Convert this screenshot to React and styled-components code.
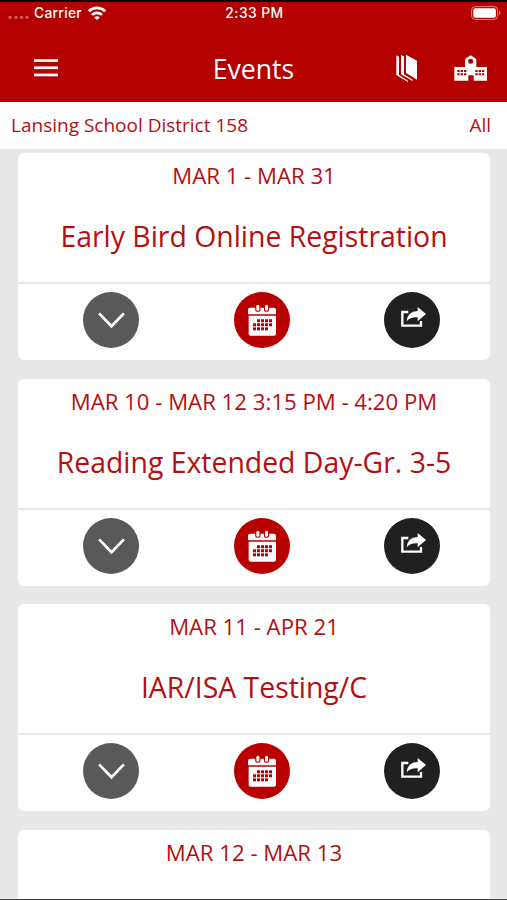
import React from "react";
import styled, { createGlobalStyle } from "styled-components";

const GlobalStyle = createGlobalStyle`
  * {
    box-sizing: border-box;
  }
  body {
    margin: 0;
    background: #e8e8e8;
    font-family: "Open Sans", "Noto Sans", sans-serif;
  }
  svg {
    display: block;
  }
`;

const Screen = styled.div`
  width: 507px;
  height: 900px;
  display: flex;
  flex-direction: column;
  overflow: hidden;
  background: #e8e8e8;
  border-top: 2px solid #0c0000;
  border-bottom: 1px solid #444;
`;

const Header = styled.header`
  flex: none;
  height: 100px;
  background: #b50000;
  color: #fff;
`;

const StatusBar = styled.div`
  display: grid;
  grid-template-columns: 1fr auto 1fr;
  align-items: center;
  height: 22px;
  padding: 0 6px 0 8px;
  font-family: Inter, "Liberation Sans", sans-serif;
  font-size: 13.8px;
  font-weight: 500;
  line-height: 22px;
`;

const Carrier = styled.div`
  display: flex;
  align-items: center;
`;

const CarrierName = styled.span`
  margin: 0 6px 0 5px;
  letter-spacing: 0.3px;
`;

const Clock = styled.span`
  letter-spacing: 0.45px;
`;

const Battery = styled.div`
  justify-self: end;
`;

const NavBar = styled.div`
  display: grid;
  grid-template-columns: minmax(0, 1fr) auto minmax(0, 1fr);
  align-items: center;
  height: 78px;
  padding: 10px 19px 0 19px;
`;

const MenuButton = styled.div`
  padding-left: 15px;
`;

const NavTitle = styled.h1`
  margin: 0;
  padding-top: 2px;
  font-size: 26.6px;
  font-weight: 400;
  line-height: 36px;
`;

const NavActions = styled.div`
  display: flex;
  align-items: center;
  justify-content: flex-end;
  gap: 36px;
`;

const FilterBar = styled.div`
  flex: none;
  display: flex;
  align-items: center;
  justify-content: space-between;
  height: 47px;
  padding: 0 16px 2px 11px;
  background: #fff;
  color: #b50f0f;
  font-size: 19px;
`;

const EventList = styled.main`
  display: flex;
  flex-direction: column;
  gap: 18.5px;
  padding: 4px 17px 0 18px;
`;

const Card = styled.article`
  flex: none;
  height: 207px;
  border-radius: 6px;
  background: #fff;
  color: #b50f0f;
  text-align: center;
`;

const CardBody = styled.div`
  height: 131px;
  padding-top: 8px;
  border-bottom: 2px solid #e8e8e8;
`;

const EventDate = styled.div`
  font-size: 22.2px;
  line-height: 30px;
`;

const EventTitle = styled.h2`
  margin: 25px 0 0;
  font-size: 28.4px;
  font-weight: 400;
  line-height: 40px;
`;

const CardActions = styled.div`
  display: flex;
  justify-content: space-between;
  padding: 8px 50px 0 65px;
`;

const RoundButton = styled.button`
  display: flex;
  width: 56px;
  height: 56px;
  padding: 0;
  border: none;
  border-radius: 50%;
  background: ${(props) => props.$color};
`;

const events = [
  { date: "MAR 1 - MAR 31", title: "Early Bird Online Registration" },
  { date: "MAR 10 - MAR 12 3:15 PM - 4:20 PM", title: "Reading Extended Day-Gr. 3-5" },
  { date: "MAR 11 - APR 21", title: "IAR/ISA Testing/C" },
  { date: "MAR 12 - MAR 13", title: "" },
];

const SignalDots = () => (
  <svg width="21" height="22" viewBox="0 0 21 22" fill="#fff" opacity="0.38">
    {[2, 8, 13.5, 19].map((x) => (
      <circle key={x} cx={x} cy="15.3" r="1.6" />
    ))}
  </svg>
);

const WifiIcon = () => (
  <svg width="18" height="14" viewBox="0 0 18 14" fill="none" stroke="#fff" strokeWidth="2.7">
    <path d="M0.9 5.3a11.5 11.5 0 0 1 16.2 0" />
    <path d="M4 8.9a7.2 7.2 0 0 1 10 0" />
    <path d="M9 14 6.2 11.5a4.2 4.2 0 0 1 5.6 0z" fill="#fff" stroke="none" />
  </svg>
);

const BatteryIcon = () => (
  <svg width="30" height="14" viewBox="0 0 30 14">
    <rect x="0.6" y="0.6" width="26" height="12.8" rx="3.6" fill="none" stroke="#fff" strokeOpacity="0.5" />
    <rect x="2.3" y="2.3" width="22.6" height="9.4" rx="2" fill="#fff" />
    <path d="M28 5v4q1.6-.7 1.6-2T28 5z" fill="#fff" fillOpacity="0.5" />
  </svg>
);

const MenuIcon = () => (
  <svg width="24" height="18" viewBox="0 0 24 18" fill="#fff">
    <rect y="0.2" width="24" height="2.7" />
    <rect y="7.4" width="24" height="2.7" />
    <rect y="14.6" width="24" height="2.7" />
  </svg>
);

const PagesIcon = () => (
  <svg width="22" height="28" viewBox="0 0 66 84" fill="#fff">
    <path d="M30 2 63 20v57L30 57z" />
    <path d="M15 3l9 4v54l26 16v4L15 61z" />
    <path d="M1 4l8 4v55l27 17v4L1 63z" />
  </svg>
);

const SchoolIcon = () => (
  <svg width="34" height="26" viewBox="0 0 102 78">
    <path d="M1 36h32V15q0-3 3-5L50 1l14 9q3 2 3 5v21h32v41H59V61H43v16H1z" fill="#fff" />
    <circle cx="50" cy="19" r="7.5" fill="#a00000" />
    {[10, 20, 30, 64, 74, 84].map((x) => (
      <path key={x} d={`M${x} 45h7v6h-7zM${x} 55h7v6h-7z`} fill="#b50000" />
    ))}
  </svg>
);

const ChevronIcon = () => (
  <svg width="56" height="56" viewBox="0 0 56 56" fill="none" stroke="#fff" strokeWidth="2.7">
    <path d="M16.1 21.4 28.5 34.2 40.9 21.4" />
  </svg>
);

const CalendarIcon = () => (
  <svg width="56" height="56" viewBox="40 36 168 168">
    <path d="M82 103V90q0-7 7-7h70q7 0 7 7v13z" fill="#fff" />
    <path d="M84 107h82v54q0 6-6 6H90q-6 0-6-6z" fill="#fff" />
    {[107, 133].map((x) => (
      <rect
        key={x}
        x={x}
        y="74"
        width="9"
        height="18"
        rx="4.5"
        fill="#fff"
        stroke="#b80000"
        strokeWidth="7"
        paintOrder="stroke"
      />
    ))}
    {[109, 121, 133, 145].map((x) => (
      <path key={x} d={`M${x} 118h9v9h-9zM${x} 130h9v9h-9z`} fill="#b80000" />
    ))}
    <path d="M97 130h9v9h-9z" fill="#b80000" />
    {[97, 109, 121, 133].map((x) => (
      <path key={x} d={`M${x} 142h9v9h-9z`} fill="#b80000" />
    ))}
  </svg>
);

const ShareIcon = () => (
  <svg width="56" height="56" viewBox="41 36 168 168">
    <path d="M114 96H96v41h56v-14" fill="none" stroke="#fff" strokeWidth="7" />
    <path d="M142 81 167 102 142 124V112q-21-2-33 12 2-30 33-31z" fill="#fff" />
  </svg>
);

const EventCard = ({ date, title }) => (
  <Card>
    <CardBody>
      <EventDate>{date}</EventDate>
      <EventTitle>{title}</EventTitle>
    </CardBody>
    <CardActions>
      <RoundButton $color="#595959" aria-label="Expand">
        <ChevronIcon />
      </RoundButton>
      <RoundButton $color="#b80000" aria-label="Add to calendar">
        <CalendarIcon />
      </RoundButton>
      <RoundButton $color="#202020" aria-label="Share">
        <ShareIcon />
      </RoundButton>
    </CardActions>
  </Card>
);

export default function App() {
  return (
    <>
      <GlobalStyle />
      <Screen>
        <Header>
          <StatusBar>
            <Carrier>
              <SignalDots />
              <CarrierName>Carrier</CarrierName>
              <WifiIcon />
            </Carrier>
            <Clock>2:33 PM</Clock>
            <Battery>
              <BatteryIcon />
            </Battery>
          </StatusBar>
          <NavBar>
            <MenuButton>
              <MenuIcon />
            </MenuButton>
            <NavTitle>Events</NavTitle>
            <NavActions>
              <PagesIcon />
              <SchoolIcon />
            </NavActions>
          </NavBar>
        </Header>
        <FilterBar>
          <span>Lansing School District 158</span>
          <span>All</span>
        </FilterBar>
        <EventList>
          {events.map((event) => (
            <EventCard key={event.date} {...event} />
          ))}
        </EventList>
      </Screen>
    </>
  );
}
